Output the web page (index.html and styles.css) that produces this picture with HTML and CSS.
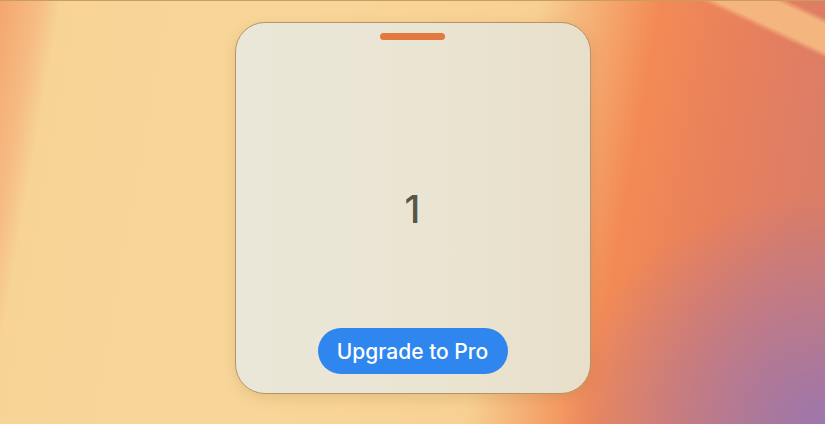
FILE: index.html
```html
<!DOCTYPE html>
<html lang="en">
<head>
    <meta charset="UTF-8">
    <meta name="viewport" content="width=device-width, initial-scale=1.0">
    <title>Counter Widget</title>
    <link rel="stylesheet" href="styles.css">
</head>
<body>
    <div class="desktop">
        <div class="widget">
            <div class="handle"></div>
            <div class="count">1</div>
            <button class="upgrade-btn">Upgrade to Pro</button>
        </div>
    </div>
</body>
</html>
```

FILE: styles.css
```css
html, body {
    margin: 0;
    padding: 0;
    height: 100%;
}

body {
    font-family: Inter, "Liberation Sans", Arial, sans-serif;
    overflow: hidden;
}

.desktop {
    height: 100%;
    box-sizing: border-box;
    padding-top: 21px;
    display: flex;
    justify-content: center;
    align-items: flex-start;
    border-top: 1px solid #c99d62;
    background:
        linear-gradient(25deg, rgba(0,0,0,0) 0 680px, rgba(246, 184, 128, 0.95) 686px 711px, rgba(0,0,0,0) 717px),
        radial-gradient(ellipse 270px 230px at 830px 424px, rgba(152, 118, 178, 0.95), rgba(152, 118, 178, 0) 100%),
        linear-gradient(100deg, #f4a66c 0, #f6bd84 40px, #f7d396 60px, #f8d699 300px, #f7d193 530px, #f5b075 585px, #f38a55 650px, #e8805c 740px, #dc7d66 825px);
}

.widget {
    width: 356px;
    height: 372px;
    box-sizing: border-box;
    border: 1px solid #b79269;
    border-radius: 30px;
    background: linear-gradient(90deg, #ebe7d8, #eae5d3 50%, #e8dfca);
    box-shadow: 0 4px 14px rgba(150, 100, 40, 0.18);
    display: flex;
    flex-direction: column;
    align-items: center;
}

.handle {
    margin-top: 10px;
    width: 65px;
    height: 7px;
    border-radius: 4px;
    background-color: #e2793f;
}

.count {
    flex: 1;
    display: flex;
    align-items: center;
    padding-top: 50px;
    font-size: 38px;
    font-weight: 500;
    color: #57544b;
}

.upgrade-btn {
    margin-bottom: 19px;
    width: 190px;
    height: 46px;
    border: none;
    border-radius: 23px;
    background-color: #2f86ef;
    color: #ffffff;
    font-family: Inter, "Liberation Sans", Arial, sans-serif;
    font-size: 21px;
    font-weight: 500;
    cursor: pointer;
}
```
